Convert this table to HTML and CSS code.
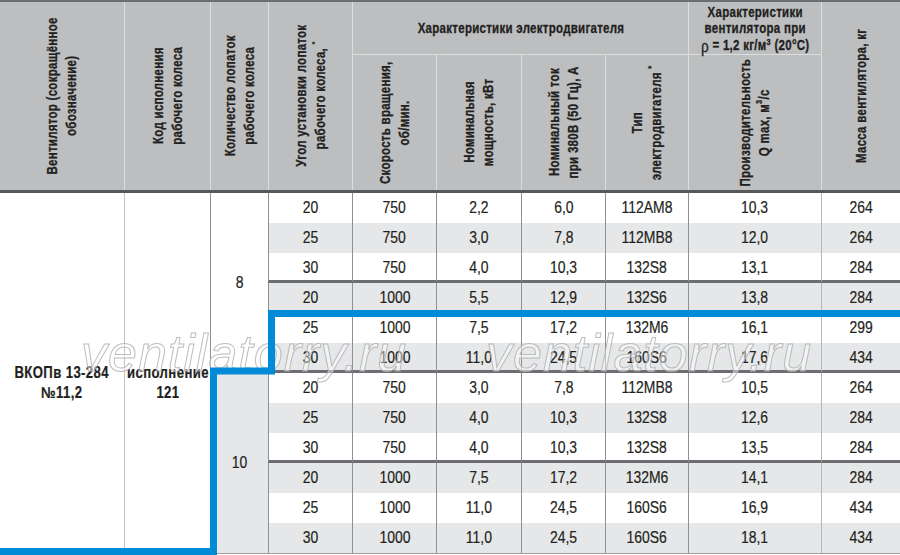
FILE: index.html
```html
<!DOCTYPE html>
<html lang="ru">
<head>
<meta charset="utf-8">
<link rel="stylesheet" href="styles.css">
</head>
<body>
<div class="sheet">
  <div class="head">
    <div class="hc h-c1"><span class="vt">Вентилятор (сокращённое<br>обозначение)</span></div>
    <div class="hc h-c2"><span class="vt">Код исполнения<br>рабочего колеса</span></div>
    <div class="hc h-c3"><span class="vt">Количество лопаток<br>рабочего колеса</span></div>
    <div class="hc h-c4"><span class="vt">Угол установки лопаток<br>рабочего колеса, <sup>°</sup></span></div>
    <div class="hc h-motor"><span class="n">Характеристики электродвигателя</span></div>
    <div class="hc h-fan"><span class="n">Характеристики<br>вентилятора при<br><span class="rho">ρ</span> = 1,2 кг/м<sup>3</sup> (20°С)</span></div>
    <div class="hc h-c10"><span class="vt">Масса вентилятора, кг</span></div>
    <div class="hc h-sub h-c5"><span class="vt">Скорость вращения,<br>об/мин.</span></div>
    <div class="hc h-sub h-c6"><span class="vt">Номинальная<br>мощность, кВт</span></div>
    <div class="hc h-sub h-c7"><span class="vt">Номинальный ток<br>при 380В (50 Гц), А</span></div>
    <div class="hc h-sub h-c8"><span class="vt">Тип<br>электродвигателя <sup>*</sup></span></div>
    <div class="hc h-sub h-c9"><span class="vt">Производительность<br>Q max, м<sup>3</sup>/с</span></div>
  </div>

  <div class="body">
    <div class="bc b-fan"><span class="n">ВКОПв 13-284<br>№11,2</span></div>
    <div class="bc b-code"><span class="n">исполнение<br>121</span></div>
    <div class="bc b-n8"><span class="n">8</span></div>
    <div class="bc b-n10"><span class="n">10</span></div>

    <div class="row"><div class="c"><span class="n">20</span></div><div class="c"><span class="n">750</span></div><div class="c"><span class="n">2,2</span></div><div class="c"><span class="n">6,0</span></div><div class="c"><span class="n">112АМ8</span></div><div class="c"><span class="n">10,3</span></div><div class="c c-last"><span class="n">264</span></div></div>
    <div class="row alt"><div class="c"><span class="n">25</span></div><div class="c"><span class="n">750</span></div><div class="c"><span class="n">3,0</span></div><div class="c"><span class="n">7,8</span></div><div class="c"><span class="n">112МВ8</span></div><div class="c"><span class="n">12,0</span></div><div class="c c-last"><span class="n">264</span></div></div>
    <div class="row end"><div class="c"><span class="n">30</span></div><div class="c"><span class="n">750</span></div><div class="c"><span class="n">4,0</span></div><div class="c"><span class="n">10,3</span></div><div class="c"><span class="n">132S8</span></div><div class="c"><span class="n">13,1</span></div><div class="c c-last"><span class="n">284</span></div></div>
    <div class="row alt"><div class="c"><span class="n">20</span></div><div class="c"><span class="n">1000</span></div><div class="c"><span class="n">5,5</span></div><div class="c"><span class="n">12,9</span></div><div class="c"><span class="n">132S6</span></div><div class="c"><span class="n">13,8</span></div><div class="c c-last"><span class="n">284</span></div></div>
    <div class="row"><div class="c"><span class="n">25</span></div><div class="c"><span class="n">1000</span></div><div class="c"><span class="n">7,5</span></div><div class="c"><span class="n">17,2</span></div><div class="c"><span class="n">132М6</span></div><div class="c"><span class="n">16,1</span></div><div class="c c-last"><span class="n">299</span></div></div>
    <div class="row alt end"><div class="c"><span class="n">30</span></div><div class="c"><span class="n">1000</span></div><div class="c"><span class="n">11,0</span></div><div class="c"><span class="n">24,5</span></div><div class="c"><span class="n">160S6</span></div><div class="c"><span class="n">17,6</span></div><div class="c c-last"><span class="n">434</span></div></div>
    <div class="row"><div class="c"><span class="n">20</span></div><div class="c"><span class="n">750</span></div><div class="c"><span class="n">3,0</span></div><div class="c"><span class="n">7,8</span></div><div class="c"><span class="n">112МВ8</span></div><div class="c"><span class="n">10,5</span></div><div class="c c-last"><span class="n">264</span></div></div>
    <div class="row alt"><div class="c"><span class="n">25</span></div><div class="c"><span class="n">750</span></div><div class="c"><span class="n">4,0</span></div><div class="c"><span class="n">10,3</span></div><div class="c"><span class="n">132S8</span></div><div class="c"><span class="n">12,6</span></div><div class="c c-last"><span class="n">284</span></div></div>
    <div class="row end"><div class="c"><span class="n">30</span></div><div class="c"><span class="n">750</span></div><div class="c"><span class="n">4,0</span></div><div class="c"><span class="n">10,3</span></div><div class="c"><span class="n">132S8</span></div><div class="c"><span class="n">13,5</span></div><div class="c c-last"><span class="n">284</span></div></div>
    <div class="row alt"><div class="c"><span class="n">20</span></div><div class="c"><span class="n">1000</span></div><div class="c"><span class="n">7,5</span></div><div class="c"><span class="n">17,2</span></div><div class="c"><span class="n">132М6</span></div><div class="c"><span class="n">14,1</span></div><div class="c c-last"><span class="n">284</span></div></div>
    <div class="row"><div class="c"><span class="n">25</span></div><div class="c"><span class="n">1000</span></div><div class="c"><span class="n">11,0</span></div><div class="c"><span class="n">24,5</span></div><div class="c"><span class="n">160S6</span></div><div class="c"><span class="n">16,9</span></div><div class="c c-last"><span class="n">434</span></div></div>
    <div class="row alt"><div class="c"><span class="n">30</span></div><div class="c"><span class="n">1000</span></div><div class="c"><span class="n">11,0</span></div><div class="c"><span class="n">24,5</span></div><div class="c"><span class="n">160S6</span></div><div class="c"><span class="n">18,1</span></div><div class="c c-last"><span class="n">434</span></div></div>
  </div>

  <div class="wm wm1">ventilatorry.ru</div>
  <div class="wm wm2">ventilatorry.ru</div>

  <svg class="blue" width="900" height="555" viewBox="0 0 900 555">
    <polyline points="905,313.5 271.5,313.5 271.5,371 213.5,371 213.5,551.5 -5,551.5" fill="none" stroke="#008bd8" stroke-width="7" stroke-linejoin="miter"/>
  </svg>
</div>
</body>
</html>
```

FILE: styles.css
```css
* { box-sizing: border-box; }

body {
  margin: 0;
  background: #ffffff;
}

.sheet {
  position: relative;
  width: 900px;
  height: 555px;
  overflow: hidden;
  font-family: "Liberation Sans", Arial, sans-serif;
  color: #231f20;
}

/* narrow rendition of the condensed face */
.n {
  display: inline-block;
  white-space: nowrap;
  transform: scaleX(0.82);
}

.head,
.body {
  display: grid;
  grid-template-columns: 124px 86px 58px 84px 84px 85px 84px 83px 133px 79px;
}

/* ---------- header ---------- */
.head {
  grid-template-rows: 52px 136px;
  background: #bcbec0;
  border-top: 2px solid #6d6e71;
  border-bottom: 3px solid #58595b;
}

.hc {
  display: flex;
  align-items: center;
  justify-content: center;
  text-align: center;
  font-weight: bold;
  font-size: 14px;
  line-height: 16.5px;
  letter-spacing: 0.35px;
  -webkit-text-stroke: 0.3px #231f20;
  border-left: 1px solid #dcdddd;
  white-space: nowrap;
}

.hc sup {
  font-size: 9px;
  line-height: 0;
  vertical-align: 5px;
}

.vt {
  display: inline-block;
  writing-mode: vertical-rl;
  transform: rotate(180deg) scaleY(0.82);
  line-height: 19px;
  text-align: center;
  white-space: nowrap;
}

.h-c1 { grid-column: 1; grid-row: 1 / 3; border-left: none; }
.h-c2 { grid-column: 2; grid-row: 1 / 3; }
.h-c3 { grid-column: 3; grid-row: 1 / 3; }
.h-c4 { grid-column: 4; grid-row: 1 / 3; }
.h-motor { grid-column: 5 / 9; grid-row: 1; }
.h-fan { grid-column: 9; grid-row: 1; padding-top: 1px; }
.h-c10 { grid-column: 10; grid-row: 1 / 3; }
.h-sub { grid-row: 2; border-top: 1px solid #dcdddd; }
.h-c5 { grid-column: 5; }
.h-c6 { grid-column: 6; }
.h-c7 { grid-column: 7; }
.h-c8 { grid-column: 8; }
.h-c9 { grid-column: 9; }

.rho {
  font-family: "Liberation Serif", serif;
  font-size: 19px;
  font-weight: normal;
  vertical-align: -2px;
  line-height: 0;
}

/* ---------- body ---------- */
.body {
  grid-template-rows: repeat(12, 30px);
  border-bottom: 1px solid #9d9fa2;
}

.bc {
  display: flex;
  align-items: center;
  justify-content: center;
  text-align: center;
  border-left: 1px solid #8e9093;
}

.b-fan,
.b-code {
  grid-row: 1 / 13;
  font-weight: bold;
  font-size: 16px;
  line-height: 20px;
  letter-spacing: 0.5px;
  -webkit-text-stroke: 0.3px #231f20;
  padding-top: 20px;
}

.b-fan { grid-column: 1; border-left: none; }
.b-code { grid-column: 2; border-left: 1px solid #c3c4c6; }

.b-n8 {
  grid-column: 3;
  grid-row: 1 / 7;
  font-size: 17px;
}

.b-n10 {
  grid-column: 3;
  grid-row: 7 / 13;
  font-size: 17px;
  background: #e6e7e8;
}

.bc .n,
.c .n {
  -webkit-text-stroke: 0.2px #231f20;
}

.row { display: contents; }

.c {
  display: flex;
  align-items: center;
  justify-content: center;
  font-size: 17px;
  border-left: 1px solid #8e9093;
}

.c-last { border-left-color: #b5b6b8; }

.row.alt .c { background: #e6e7e8; }

.row.end .c { border-bottom: 3px solid #6d6e71; padding-top: 3px; }

/* ---------- overlays ---------- */
.wm {
  position: absolute;
  top: 327px;
  font-family: "Liberation Sans", sans-serif;
  font-style: italic;
  font-size: 52px;
  line-height: 52px;
  letter-spacing: 1px;
  color: rgba(255, 255, 255, 0.45);
  -webkit-text-stroke: 1px rgba(178, 178, 181, 0.85);
  pointer-events: none;
  white-space: nowrap;
}

.wm1 { left: 81px; }
.wm2 { left: 486px; }

.blue {
  position: absolute;
  left: 0;
  top: 0;
  pointer-events: none;
}
```
